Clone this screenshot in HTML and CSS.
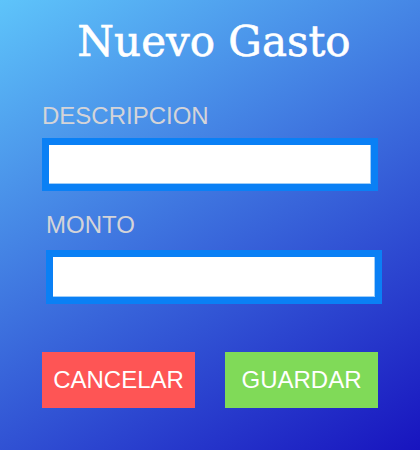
FILE: index.html
```
<!DOCTYPE html>
<html lang="es">
<head>
<meta charset="utf-8">
<title>Nuevo Gasto</title>
<link rel="stylesheet" href="styles.css">
</head>
<body>
<main class="page">
  <h1 class="title">Nuevo Gasto</h1>
  <form class="form">
    <label class="field">
      <span class="label">DESCRIPCION</span>
      <input class="input" type="text">
    </label>
    <label class="field field-shift">
      <span class="label">MONTO</span>
      <input class="input" type="text">
    </label>
    <div class="actions">
      <button type="button" class="btn btn-cancel">CANCELAR</button>
      <button type="button" class="btn btn-save">GUARDAR</button>
    </div>
  </form>
</main>
</body>
</html>
```
FILE: styles.css
```
html, body {
  margin: 0;
  padding: 0;
}
body {
  width: 420px;
  height: 450px;
  overflow: hidden;
  background: linear-gradient(150deg, #5ec4fa 0%, #1814bf 100%);
  font-family: "Liberation Sans", Arial, sans-serif;
}
.page {
  padding: 14px 0 0 0;
}
.title {
  margin: 0;
  text-align: center;
  font-family: "DejaVu Serif", serif;
  font-weight: normal;
  font-size: 42px;
  line-height: 56px;
  color: #ffffff;
  padding-left: 8px;
  -webkit-text-stroke: 0.6px #ffffff;
}
.form {
  padding: 32px 0 0 42px;
  display: flex;
  flex-direction: column;
}
.field {
  display: flex;
  flex-direction: column;
}
.field-shift {
  margin-top: 20px;
  padding-left: 4px;
}
.label {
  font-size: 24px;
  line-height: 28px;
  color: #d4d4d8;
}
.input {
  margin-top: 8px;
  box-sizing: border-box;
  width: 336px;
  height: 53px;
  border: 7px solid #0a80f5;
  outline: 1px solid transparent;
  box-shadow: inset -1px -1px 0 #9fcdf8;
  background: #ffffff;
  padding: 0 8px;
  font-size: 20px;
}
.field-shift .input {
  margin-top: 11px;
  height: 54px;
}
.actions {
  margin-top: 48px;
  display: flex;
  gap: 30px;
}
.btn {
  width: 153px;
  height: 56px;
  border: none;
  color: #ffffff;
  font-family: "Liberation Sans", Arial, sans-serif;
  font-size: 24px;
  padding: 0;
}
.btn-cancel {
  background: #fe5555;
}
.btn-save {
  background: #80da58;
}
```
